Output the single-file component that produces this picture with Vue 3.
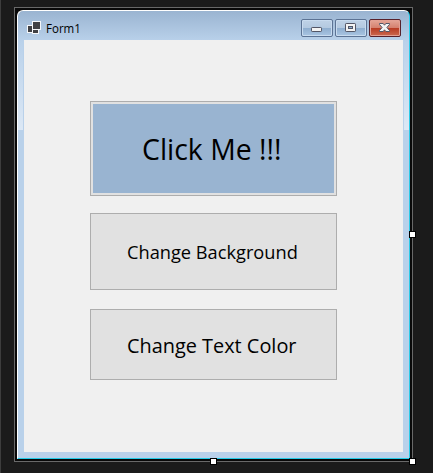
<script setup>
const actions = [
  { label: 'Click Me !!!', kind: 'primary' },
  { label: 'Change Background', kind: 'background' },
  { label: 'Change Text Color', kind: 'color' },
]
const handles = ['right', 'bottom', 'corner']
</script>

<template>
  <main class="designer">
    <div class="selection">
      <section class="window">
        <i class="glass glass-left"></i>
        <i class="glass glass-right"></i>
        <header class="titlebar">
          <svg class="app-icon" width="14" height="14" viewBox="0 0 14 14" shape-rendering="crispEdges">
            <path fill="#f4f6f9" d="M5 0h9v9h-2v4H5v-1H0V4h5z" />
            <path fill="#404044" d="M6 1h7v7H6zM1 5h4v6H1zM6 9h5v3H6z" />
          </svg>
          <h1 class="title"><span>Form1</span></h1>
          <nav class="controls">
            <button class="control" aria-label="Minimize">
              <svg width="28" height="14" viewBox="0 0 28 14">
                <rect x="8.5" y="6.5" width="10" height="4" rx=".7" fill="#f3f3f3" stroke="#535666" />
              </svg>
            </button>
            <button class="control" aria-label="Maximize">
              <svg width="28" height="14" viewBox="0 0 28 14">
                <rect x="8.5" y="2.5" width="10" height="8" rx=".7" fill="#f3f3f3" stroke="#535666" />
                <rect x="11.5" y="5.5" width="4" height="2" fill="#8eb0d2" stroke="#535666" />
              </svg>
            </button>
            <button class="control close" aria-label="Close">
              <svg width="28" height="14" viewBox="0 0 28 14">
                <path
                  d="M8.5 2.5h3.7l1.3 1.7 1.3-1.7h3.7v1L15.9 6.5l2.6 3v1h-3.7l-1.3-1.7-1.3 1.7H8.5v-1l2.6-3-2.6-3z"
                  fill="#f3f3f3" stroke="#535666" stroke-linejoin="round" />
              </svg>
            </button>
          </nav>
        </header>
        <div class="client">
          <button v-for="a in actions" :key="a.kind" class="action" :class="a.kind">
            <span>{{ a.label }}</span>
          </button>
        </div>
      </section>
      <i v-for="h in handles" :key="h" class="handle" :class="h"></i>
    </div>
  </main>
</template>

<style>
body {
  margin: 0;
  background: #1b1b1b;
}
</style>

<style scoped>
* {
  box-sizing: border-box;
}
.designer {
  width: 433px;
  height: 473px;
  padding: 7px 0 0 13px;
  border-left: 1px solid #3d3d3d;
  background: #1b1b1b;
  overflow: hidden;
  font-family: 'Open Sans', 'Noto Sans', sans-serif;
  color: #000;
}
.selection {
  position: relative;
  width: 399px;
  height: 455px;
  padding: 2px;
  border: 1px solid #696969;
  background: #090909;
}
.window {
  position: relative;
  width: 393px;
  height: 449px;
  padding: 0 6px;
  border: 1px solid #fff;
  border-right-color: #2bcbe8;
  border-bottom-color: #22cbe8;
  border-radius: 6px 6px 0 0;
  background: linear-gradient(#9ab4d1 0, #b9d1ea 30px, #b9d1ea 100%);
}
.glass {
  position: absolute;
  top: 30px;
  width: 5px;
  height: 89px;
  background: linear-gradient(#b9d1ea, #dce8f5);
}
.glass-left {
  left: 0;
}
.glass-right {
  right: 0;
}
.titlebar {
  display: flex;
  align-items: flex-start;
  height: 29px;
}
.app-icon {
  flex: none;
  margin: 10px 0 0 3px;
}
.title {
  flex: 1;
  margin: 9px 0 0 5px;
  font-size: 12px;
  font-weight: 400;
  line-height: 18px;
}
.title span {
  display: inline-block;
  transform-origin: left;
  transform: scaleX(0.96);
}
.controls {
  display: flex;
  gap: 2px;
  margin: 8px 2px 0 0;
}
.control {
  width: 32px;
  height: 18px;
  padding: 1px;
  border: 1px solid #5c7394;
  border-radius: 2px;
  background: linear-gradient(#bfd2e7 0, #b3c9e0 50%, #8eadce 50%, #a9c5e2 100%);
  box-shadow: inset 0 0 0 1px #c8dbef;
}
.control svg {
  display: block;
}
.close {
  border-color: #57202a;
  background: linear-gradient(#e5a698 0, #d5816f 48%, #b83a22 50%, #cb6a50 100%);
  box-shadow: inset 0 0 0 1px #e3a093;
}
.client {
  display: flex;
  flex-direction: column;
  align-items: flex-start;
  width: 379px;
  height: 412px;
  padding: 61px 0 0 66px;
  background: #f0f0f0;
}
.action {
  display: flex;
  align-items: center;
  width: 247px;
  padding: 0 0 0 36px;
  border: 1px solid #adadad;
  background: #e1e1e1;
  color: #000;
  font-family: inherit;
  white-space: nowrap;
}
.action span {
  display: block;
  transform-origin: left;
}
.primary {
  height: 95px;
  padding-left: 50.5px;
  background: #99b4d1;
  box-shadow: inset 0 0 0 2px #e1e1e1;
  font-size: 29.3px;
}
.background {
  height: 77px;
  margin-top: 17px;
  font-size: 18.5px;
}
.color {
  height: 71px;
  margin-top: 19px;
  font-size: 20.5px;
}
.primary span {
  transform: scaleX(0.97);
}
.background span {
  transform: scaleX(0.985);
}
.color span {
  transform: scaleX(0.97);
}
.handle {
  position: absolute;
  width: 7px;
  height: 7px;
  border: 1px solid #000;
  background: #fff;
}
.right {
  left: 394px;
  top: 223px;
}
.bottom {
  left: 195px;
  top: 450px;
}
.corner {
  left: 394px;
  top: 450px;
}
</style>
